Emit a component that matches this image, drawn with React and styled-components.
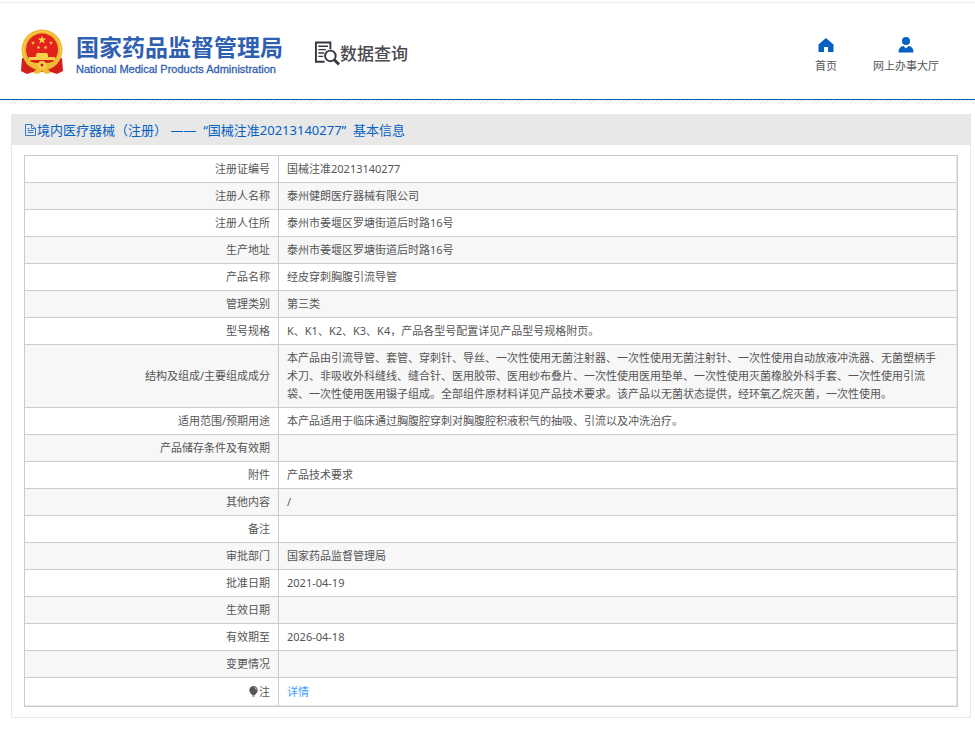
import styled, { createGlobalStyle } from "styled-components";

const GlobalStyle = createGlobalStyle`
  * {
    box-sizing: border-box;
  }
  body {
    margin: 0;
    background-color: #fff;
    color: #555;
    font-family: "Noto Sans", "Noto Sans CJK SC", sans-serif;
    font-size: 11px;
    line-height: 18px;
  }
  a {
    text-decoration: none;
  }
`;

const Header = styled.header`
  display: flex;
  align-items: flex-start;
  height: 98px;
  margin-top: 2px;
  padding: 26px 36px 0 20px;
  border-top: 1px solid #eee;
  border-bottom: 1px solid #0b5cab;
`;

const Hatch = styled.div`
  height: 4px;
  background: repeating-linear-gradient(
    135deg,
    #ececec 0,
    #ececec 1px,
    #fff 1px,
    #fff 3px
  );
`;

const Brand = styled.a`
  display: flex;
  gap: 12px;
  color: #2f5fb0;
`;

const BrandText = styled.div`
  padding-top: 3px;
  white-space: nowrap;
`;

const BrandName = styled.div`
  font-family: "Noto Sans CJK SC", sans-serif;
  font-size: 23px;
  font-weight: 700;
  line-height: 28px;
`;

const BrandSub = styled.div`
  font-family: "Liberation Sans", Arial, sans-serif;
  font-size: 11px;
  line-height: 18px;
  -webkit-text-stroke: 0.3px currentColor;
`;

const Search = styled.a`
  display: flex;
  align-items: center;
  margin: 10px 0 0 31px;
  color: #4a4a50;
  font-family: "Noto Sans CJK SC", sans-serif;
  font-size: 17px;
  font-weight: 500;
  line-height: 28px;
  white-space: nowrap;
`;

const Nav = styled.nav`
  display: flex;
  gap: 36px;
  margin-left: auto;
  padding-top: 8px;
`;

const NavLink = styled.a`
  display: flex;
  flex-direction: column;
  align-items: center;
  gap: 4px;
  color: #555;
  white-space: nowrap;
  svg {
    fill: #0560c4;
  }
`;

const Panel = styled.main`
  margin: 10px 4px 15px 11px;
  border: 1px solid #e8e8e8;
`;

const PanelTitle = styled.h1`
  display: flex;
  align-items: center;
  height: 30px;
  margin: 0;
  padding-left: 12px;
  background-color: #e8e8e8;
  color: #0560c4;
  font-size: 13px;
  font-weight: 400;
  white-space: pre;
`;

const TableFrame = styled.div`
  margin: 10px 12px;
  border: 1px solid #ccc;
`;

const InfoTable = styled.table`
  width: 100%;
  border-spacing: 0;
`;

const Label = styled.th`
  width: 254px;
  height: 27px;
  padding: 4px 8px;
  border-right: 1px solid #ccc;
  border-bottom: 1px solid #ccc;
  font-weight: 400;
  text-align: right;
`;

const Value = styled.td`
  padding: 4px 12px 4px 8px;
  border-right: 1px solid #e8e8e8;
  border-bottom: 1px solid #ccc;
`;

const Row = styled.tr`
  &:nth-child(even) {
    background-color: #f7f7f7;
  }
  &:last-child > * {
    height: 28px;
    border-bottom-color: #e8e8e8;
  }
`;

const DetailLink = styled.a`
  color: #409eff;
`;

const rows = [
  ["注册证编号", "国械注准20213140277"],
  ["注册人名称", "泰州健朗医疗器械有限公司"],
  ["注册人住所", "泰州市姜堰区罗塘街道后时路16号"],
  ["生产地址", "泰州市姜堰区罗塘街道后时路16号"],
  ["产品名称", "经皮穿刺胸腹引流导管"],
  ["管理类别", "第三类"],
  ["型号规格", "K、K1、K2、K3、K4，产品各型号配置详见产品型号规格附页。"],
  [
    "结构及组成/主要组成成分",
    "本产品由引流导管、套管、穿刺针、导丝、一次性使用无菌注射器、一次性使用无菌注射针、一次性使用自动放液冲洗器、无菌塑柄手术刀、非吸收外科缝线、缝合针、医用胶带、医用纱布叠片、一次性使用医用垫单、一次性使用灭菌橡胶外科手套、一次性使用引流袋、一次性使用医用镊子组成。全部组件原材料详见产品技术要求。该产品以无菌状态提供，经环氧乙烷灭菌，一次性使用。",
  ],
  [
    "适用范围/预期用途",
    "本产品适用于临床通过胸腹腔穿刺对胸腹腔积液积气的抽吸、引流以及冲洗治疗。",
  ],
  ["产品储存条件及有效期", ""],
  ["附件", "产品技术要求"],
  ["其他内容", "/"],
  ["备注", ""],
  ["审批部门", "国家药品监督管理局"],
  ["批准日期", "2021-04-19"],
  ["生效日期", ""],
  ["有效期至", "2026-04-18"],
  ["变更情况", ""],
];

const STAR = "M0-5 1.2-1.6H4.8L1.9.6 3 4 0 1.9-3 4-1.9.6-4.8-1.6H-1.2Z";

function Emblem() {
  return (
    <svg width="44" height="46" viewBox="0 0 44 46">
      <path d="M2 29 1 42l6 3 6-2h18l6 2 6-3-1-13z" fill="#d3201c" />
      <circle cx="22" cy="21" r="20.5" fill="#efb52c" />
      <circle cx="22" cy="21" r="18.5" fill="none" stroke="#f8d457" />
      <circle cx="22" cy="20.5" r="16" fill="#e2231d" />
      <g fill="#f8d04a">
        <path transform="translate(22 11)scale(.9)" d={STAR} />
        <path transform="translate(13 14)scale(.42)" d={STAR} />
        <path transform="translate(31 14)scale(.42)" d={STAR} />
        <path transform="translate(18.5 18.5)scale(.42)" d={STAR} />
        <path transform="translate(25.5 18.5)scale(.42)" d={STAR} />
        <path d="M17 24h10l1 2v2h7v3H9v-3h7v-2z" />
      </g>
      <path d="M7 32h30l-4 5H11z" fill="#d3201c" />
      <path
        d="M4 29q8 5 14 5l4-1 4 1q6 0 14-5l-3 6q-5 4-9 4l-6-3-6 3q-4 0-9-4z"
        fill="#f2bd35"
      />
      <circle cx="22" cy="36" r="4" fill="#f8d04a" />
      <circle cx="22" cy="36" r="1.5" fill="#d3201c" />
      <path d="M13 44q3-5 9-4 6-1 9 4l-5 1-4-3-4 3z" fill="#f2bd35" />
    </svg>
  );
}

function SearchIcon() {
  return (
    <svg width="26" height="27" viewBox="0 0 27 27" fill="none" stroke="#36363f">
      <path d="M17 9V2H2v20h9" strokeWidth="2" />
      <path d="M4.500 6h10M4.500 9.500h8M4.500 13h6M4.500 16.500h5" strokeWidth="1.400" />
      <circle cx="17" cy="16" r="5.500" strokeWidth="2" />
      <path d="m21 20 5 5" strokeWidth="3" />
    </svg>
  );
}

function DocIcon() {
  return (
    <svg width="13" height="12" viewBox="0 0 13 12" fill="none" stroke="#0560c4">
      <path d="M1.500.5h6l4 4v7h-10zM7.500.5v4h4M3.500 4.500h2M3.500 6.500h6M3.500 8.500h6" strokeWidth=".8" />
    </svg>
  );
}

const Bulb = styled.svg`
  margin-right: 1px;
  vertical-align: -1px;
`;

function BulbIcon() {
  return (
    <Bulb width="9" height="11" viewBox="0 0 9 11">
      <path d="M4.500 0a4.200 4.200 0 0 1 2.500 7.500L6 9H3L2 7.500A4.200 4.200 0 0 1 4.500 0z" fill="#555" />
      <path d="M3.200 10h2.600" stroke="#555" />
      <path d="M5.500 1.500q1.500.5 1.700 2" stroke="#fff" fill="none" strokeWidth=".8" />
    </Bulb>
  );
}

function App() {
  return (
    <>
      <GlobalStyle />
      <Header>
        <Brand href="#">
          <Emblem />
          <BrandText>
            <BrandName>国家药品监督管理局</BrandName>
            <BrandSub>National Medical Products Administration</BrandSub>
          </BrandText>
        </Brand>
        <Search href="#">
          <SearchIcon />
          数据查询
        </Search>
        <Nav>
          <NavLink href="#">
            <svg width="16" height="16" viewBox="0 0 16 16">
              <path d="M8 1 .5 7.500V15H6v-5h4v5h5.500V7.500z" />
            </svg>
            首页
          </NavLink>
          <NavLink href="#">
            <svg width="16" height="16" viewBox="0 0 16 16">
              <circle cx="8" cy="4" r="4" />
              <path d="M.5 15.500q0-6 5-6.500L8 11.500 10.500 9q5 .5 5 6.500z" />
            </svg>
            网上办事大厅
          </NavLink>
        </Nav>
      </Header>
      <Hatch />
      <Panel>
        <PanelTitle>
          <DocIcon />
          {"境内医疗器械（注册） ——  “国械注准20213140277”  基本信息"}
        </PanelTitle>
        <TableFrame>
          <InfoTable>
            <tbody>
              {rows.map(([label, value]) => (
                <Row key={label}>
                  <Label scope="row">{label}</Label>
                  <Value>{value}</Value>
                </Row>
              ))}
              <Row>
                <Label scope="row">
                  <BulbIcon />注
                </Label>
                <Value>
                  <DetailLink href="#">详情</DetailLink>
                </Value>
              </Row>
            </tbody>
          </InfoTable>
        </TableFrame>
      </Panel>
    </>
  );
}

export default App;
